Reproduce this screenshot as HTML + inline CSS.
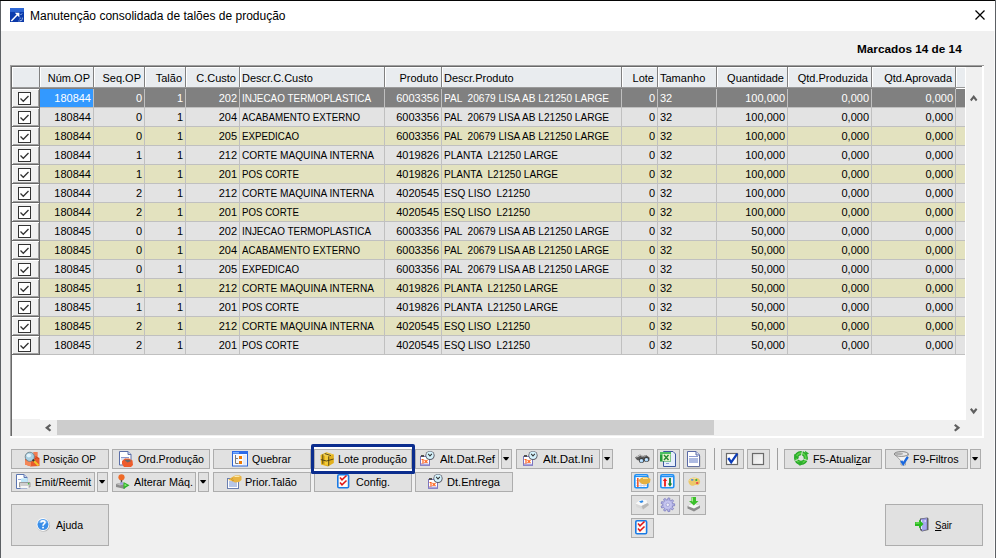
<!DOCTYPE html><html><head><meta charset="utf-8"><style>
*{margin:0;padding:0;box-sizing:border-box}
html,body{width:996px;height:558px;overflow:hidden;background:#f0f0f0;font-family:"Liberation Sans", sans-serif;font-size:11px;color:#000}
.a{position:absolute}
.t{position:absolute;white-space:pre;line-height:13px}
.btn{position:absolute;background:#e1e1e1;border:1px solid #adadad}
.sx{display:inline-block;transform-origin:0 0}
u{text-decoration-skip-ink:none}
</style></head><body>

<div class="a" style="left:0;top:0;width:996px;height:31px;background:#fff"></div>
<div class="a" style="left:0;top:0;width:996px;height:1px;background:#050505"></div>
<div class="a" style="left:60px;top:0;width:20px;height:1px;background:#5c6064"></div>
<div class="a" style="left:0;top:1px;width:1px;height:557px;background:#5c6064"></div>
<div class="a" style="left:995px;top:0;width:1px;height:558px;background:#5c6064"></div>
<div class="a" style="left:994px;top:31px;width:1px;height:527px;background:#fafafa"></div>
<svg class="a" style="left:0;top:0" width="30" height="30" viewBox="0 0 30 30">
<defs><linearGradient id="tg" x1="0" y1="0" x2="0" y2="1"><stop offset="0" stop-color="#2f6ad8"/><stop offset="0.25" stop-color="#2a62d0"/><stop offset="0.32" stop-color="#0b3cae"/><stop offset="1" stop-color="#0a38a8"/></linearGradient></defs>
<rect x="10" y="8" width="14" height="14" fill="url(#tg)"/>
<path d="M11.3 21 L17.8 14.3" stroke="#fff" stroke-width="1.5"/>
<polygon points="14.8,12.8 19.4,12.8 19.4,17.4" fill="#fff"/>
<path d="M20.5 15 l1.5 -1.5 M19.5 19 l1.2 -1 M21.8 18.2 h1.2 M20 21 l2.5 -1.3 M18.5 21 h1" stroke="#b8ccf0" stroke-width="1"/>
</svg>
<div class="t" style="left:30px;top:9px;font-size:12px;line-height:15px;color:#000">Manutenção consolidada de talões de produção</div>
<svg class="a" style="left:974px;top:9px" width="13" height="13" viewBox="0 0 13 13"><path d="M1.5 1.5 L10.5 10.5 M10.5 1.5 L1.5 10.5" stroke="#000" stroke-width="1.25"/></svg>
<div class="t" style="left:857px;top:43px;font-weight:bold;font-size:11px;"><span class="sx" style="transform:scaleX(1.07)">Marcados 14 de 14</span></div>
<div class="a" style="left:10px;top:65px;width:974px;height:373px;background:#fff"></div>
<div class="a" style="left:10px;top:65px;width:972px;height:371px;background:#a0a0a0"></div>
<div class="a" style="left:11px;top:66px;width:971px;height:370px;background:#696969"></div>
<div class="a" style="left:10px;top:65px;width:974px;height:1px;background:#a0a0a0"></div>
<div class="a" style="left:12px;top:67px;width:970px;height:369px;background:#fff"></div>
<div class="a" style="left:12px;top:67px;width:28px;height:22px;background:#808080"></div><div class="a" style="left:12px;top:67px;width:27px;height:21px;background:#fff"></div><div class="a" style="left:13px;top:68px;width:26px;height:20px;background:#e9ecef"></div>
<div class="a" style="left:40px;top:67px;width:54px;height:22px;background:#808080"></div><div class="a" style="left:40px;top:67px;width:53px;height:21px;background:#fff"></div><div class="a" style="left:41px;top:68px;width:52px;height:20px;background:#e9ecef"></div>
<div class="t" style="left:40px;width:50px;text-align:right;top:72px">Núm.OP</div>
<div class="a" style="left:94px;top:67px;width:51px;height:22px;background:#808080"></div><div class="a" style="left:94px;top:67px;width:50px;height:21px;background:#fff"></div><div class="a" style="left:95px;top:68px;width:49px;height:20px;background:#e9ecef"></div>
<div class="t" style="left:94px;width:47px;text-align:right;top:72px">Seq.OP</div>
<div class="a" style="left:145px;top:67px;width:41px;height:22px;background:#808080"></div><div class="a" style="left:145px;top:67px;width:40px;height:21px;background:#fff"></div><div class="a" style="left:146px;top:68px;width:39px;height:20px;background:#e9ecef"></div>
<div class="t" style="left:145px;width:37px;text-align:right;top:72px">Talão</div>
<div class="a" style="left:186px;top:67px;width:54px;height:22px;background:#808080"></div><div class="a" style="left:186px;top:67px;width:53px;height:21px;background:#fff"></div><div class="a" style="left:187px;top:68px;width:52px;height:20px;background:#e9ecef"></div>
<div class="t" style="left:186px;width:50px;text-align:right;top:72px">C.Custo</div>
<div class="a" style="left:240px;top:67px;width:145px;height:22px;background:#808080"></div><div class="a" style="left:240px;top:67px;width:144px;height:21px;background:#fff"></div><div class="a" style="left:241px;top:68px;width:143px;height:20px;background:#e9ecef"></div>
<div class="t" style="left:242px;top:72px">Descr.C.Custo</div>
<div class="a" style="left:385px;top:67px;width:57px;height:22px;background:#808080"></div><div class="a" style="left:385px;top:67px;width:56px;height:21px;background:#fff"></div><div class="a" style="left:386px;top:68px;width:55px;height:20px;background:#e9ecef"></div>
<div class="t" style="left:385px;width:53px;text-align:right;top:72px">Produto</div>
<div class="a" style="left:442px;top:67px;width:180px;height:22px;background:#808080"></div><div class="a" style="left:442px;top:67px;width:179px;height:21px;background:#fff"></div><div class="a" style="left:443px;top:68px;width:178px;height:20px;background:#e9ecef"></div>
<div class="t" style="left:444px;top:72px">Descr.Produto</div>
<div class="a" style="left:622px;top:67px;width:36px;height:22px;background:#808080"></div><div class="a" style="left:622px;top:67px;width:35px;height:21px;background:#fff"></div><div class="a" style="left:623px;top:68px;width:34px;height:20px;background:#e9ecef"></div>
<div class="t" style="left:622px;width:32px;text-align:right;top:72px">Lote</div>
<div class="a" style="left:658px;top:67px;width:59px;height:22px;background:#808080"></div><div class="a" style="left:658px;top:67px;width:58px;height:21px;background:#fff"></div><div class="a" style="left:659px;top:68px;width:57px;height:20px;background:#e9ecef"></div>
<div class="t" style="left:660px;top:72px">Tamanho</div>
<div class="a" style="left:717px;top:67px;width:71px;height:22px;background:#808080"></div><div class="a" style="left:717px;top:67px;width:70px;height:21px;background:#fff"></div><div class="a" style="left:718px;top:68px;width:69px;height:20px;background:#e9ecef"></div>
<div class="t" style="left:717px;width:67px;text-align:right;top:72px">Quantidade</div>
<div class="a" style="left:788px;top:67px;width:84px;height:22px;background:#808080"></div><div class="a" style="left:788px;top:67px;width:83px;height:21px;background:#fff"></div><div class="a" style="left:789px;top:68px;width:82px;height:20px;background:#e9ecef"></div>
<div class="t" style="left:788px;width:80px;text-align:right;top:72px">Qtd.Produzida</div>
<div class="a" style="left:872px;top:67px;width:84px;height:22px;background:#808080"></div><div class="a" style="left:872px;top:67px;width:83px;height:21px;background:#fff"></div><div class="a" style="left:873px;top:68px;width:82px;height:20px;background:#e9ecef"></div>
<div class="t" style="left:872px;width:80px;text-align:right;top:72px">Qtd.Aprovada</div>
<div class="a" style="left:956px;top:67px;width:9px;height:21px;background:#fff"></div><div class="a" style="left:957px;top:68px;width:8px;height:20px;background:#e9ecef"></div>
<div class="a" style="left:12px;top:87px;width:953px;height:1px;background:#9a9a9a"></div>
<div class="a" style="left:12px;top:89px;width:28px;height:19px;background:#696969"></div><div class="a" style="left:12px;top:89px;width:27px;height:18px;background:#fff"></div><div class="a" style="left:13px;top:90px;width:26px;height:17px;background:#a0a0a0"></div>
<div class="a" style="left:13px;top:90px;width:25px;height:16px;background:#f0f0f0"></div>
<div class="a" style="left:18px;top:92px;width:13px;height:13px;border:1px solid #333;background:#fff"></div>
<svg class="a" style="left:19px;top:93px" width="11" height="11" viewBox="0 0 11 11"><path d="M1.5 5.5 L4.3 8.3 L9.5 3" stroke="#333" stroke-width="1.3" fill="none"/></svg>
<div class="a" style="left:40px;top:89px;width:925px;height:19px;background:#c0c0c0"></div>
<div class="a" style="left:40px;top:89px;width:53px;height:18px;background:#3399ff"></div>
<div class="t" style="left:40px;width:51px;text-align:right;top:92px;color:#fff">180844</div>
<div class="a" style="left:94px;top:89px;width:50px;height:18px;background:#808080"></div>
<div class="t" style="left:94px;width:48px;text-align:right;top:92px;color:#fff">0</div>
<div class="a" style="left:145px;top:89px;width:40px;height:18px;background:#808080"></div>
<div class="t" style="left:145px;width:38px;text-align:right;top:92px;color:#fff">1</div>
<div class="a" style="left:186px;top:89px;width:53px;height:18px;background:#808080"></div>
<div class="t" style="left:186px;width:51px;text-align:right;top:92px;color:#fff">202</div>
<div class="a" style="left:240px;top:89px;width:144px;height:18px;background:#808080"></div>
<div class="t" style="left:242px;top:92px;color:#fff"><span class="sx" style="transform:scaleX(0.9)">INJECAO TERMOPLASTICA</span></div>
<div class="a" style="left:385px;top:89px;width:56px;height:18px;background:#808080"></div>
<div class="t" style="left:385px;width:54px;text-align:right;top:92px;color:#fff">6003356</div>
<div class="a" style="left:442px;top:89px;width:179px;height:18px;background:#808080"></div>
<div class="t" style="left:444px;top:92px;color:#fff"><span class="sx" style="transform:scaleX(0.918)">PAL  20679 LISA AB L21250 LARGE</span></div>
<div class="a" style="left:622px;top:89px;width:35px;height:18px;background:#808080"></div>
<div class="t" style="left:622px;width:33px;text-align:right;top:92px;color:#fff">0</div>
<div class="a" style="left:658px;top:89px;width:58px;height:18px;background:#808080"></div>
<div class="t" style="left:660px;top:92px;color:#fff">32</div>
<div class="a" style="left:717px;top:89px;width:70px;height:18px;background:#808080"></div>
<div class="t" style="left:717px;width:68px;text-align:right;top:92px;color:#fff">100,000</div>
<div class="a" style="left:788px;top:89px;width:83px;height:18px;background:#808080"></div>
<div class="t" style="left:788px;width:81px;text-align:right;top:92px;color:#fff">0,000</div>
<div class="a" style="left:872px;top:89px;width:83px;height:18px;background:#808080"></div>
<div class="t" style="left:872px;width:81px;text-align:right;top:92px;color:#fff">0,000</div>
<div class="a" style="left:956px;top:89px;width:9px;height:18px;background:#808080"></div>
<div class="a" style="left:12px;top:108px;width:28px;height:19px;background:#696969"></div><div class="a" style="left:12px;top:108px;width:27px;height:18px;background:#fff"></div><div class="a" style="left:13px;top:109px;width:26px;height:17px;background:#a0a0a0"></div>
<div class="a" style="left:13px;top:109px;width:25px;height:16px;background:#f0f0f0"></div>
<div class="a" style="left:18px;top:111px;width:13px;height:13px;border:1px solid #333;background:#fff"></div>
<svg class="a" style="left:19px;top:112px" width="11" height="11" viewBox="0 0 11 11"><path d="M1.5 5.5 L4.3 8.3 L9.5 3" stroke="#333" stroke-width="1.3" fill="none"/></svg>
<div class="a" style="left:40px;top:108px;width:925px;height:19px;background:#c0c0c0"></div>
<div class="a" style="left:40px;top:108px;width:53px;height:18px;background:#e3e3e3"></div>
<div class="t" style="left:40px;width:51px;text-align:right;top:111px;color:#000">180844</div>
<div class="a" style="left:94px;top:108px;width:50px;height:18px;background:#e3e3e3"></div>
<div class="t" style="left:94px;width:48px;text-align:right;top:111px;color:#000">0</div>
<div class="a" style="left:145px;top:108px;width:40px;height:18px;background:#e3e3e3"></div>
<div class="t" style="left:145px;width:38px;text-align:right;top:111px;color:#000">1</div>
<div class="a" style="left:186px;top:108px;width:53px;height:18px;background:#e3e3e3"></div>
<div class="t" style="left:186px;width:51px;text-align:right;top:111px;color:#000">204</div>
<div class="a" style="left:240px;top:108px;width:144px;height:18px;background:#e3e3e3"></div>
<div class="t" style="left:242px;top:111px;color:#000"><span class="sx" style="transform:scaleX(0.887)">ACABAMENTO EXTERNO</span></div>
<div class="a" style="left:385px;top:108px;width:56px;height:18px;background:#e3e3e3"></div>
<div class="t" style="left:385px;width:54px;text-align:right;top:111px;color:#000">6003356</div>
<div class="a" style="left:442px;top:108px;width:179px;height:18px;background:#e3e3e3"></div>
<div class="t" style="left:444px;top:111px;color:#000"><span class="sx" style="transform:scaleX(0.918)">PAL  20679 LISA AB L21250 LARGE</span></div>
<div class="a" style="left:622px;top:108px;width:35px;height:18px;background:#e3e3e3"></div>
<div class="t" style="left:622px;width:33px;text-align:right;top:111px;color:#000">0</div>
<div class="a" style="left:658px;top:108px;width:58px;height:18px;background:#e3e3e3"></div>
<div class="t" style="left:660px;top:111px;color:#000">32</div>
<div class="a" style="left:717px;top:108px;width:70px;height:18px;background:#e3e3e3"></div>
<div class="t" style="left:717px;width:68px;text-align:right;top:111px;color:#000">100,000</div>
<div class="a" style="left:788px;top:108px;width:83px;height:18px;background:#e3e3e3"></div>
<div class="t" style="left:788px;width:81px;text-align:right;top:111px;color:#000">0,000</div>
<div class="a" style="left:872px;top:108px;width:83px;height:18px;background:#e3e3e3"></div>
<div class="t" style="left:872px;width:81px;text-align:right;top:111px;color:#000">0,000</div>
<div class="a" style="left:956px;top:108px;width:9px;height:18px;background:#e3e3e3"></div>
<div class="a" style="left:12px;top:127px;width:28px;height:19px;background:#696969"></div><div class="a" style="left:12px;top:127px;width:27px;height:18px;background:#fff"></div><div class="a" style="left:13px;top:128px;width:26px;height:17px;background:#a0a0a0"></div>
<div class="a" style="left:13px;top:128px;width:25px;height:16px;background:#f0f0f0"></div>
<div class="a" style="left:18px;top:130px;width:13px;height:13px;border:1px solid #333;background:#fff"></div>
<svg class="a" style="left:19px;top:131px" width="11" height="11" viewBox="0 0 11 11"><path d="M1.5 5.5 L4.3 8.3 L9.5 3" stroke="#333" stroke-width="1.3" fill="none"/></svg>
<div class="a" style="left:40px;top:127px;width:925px;height:19px;background:#c0c0c0"></div>
<div class="a" style="left:40px;top:127px;width:53px;height:18px;background:#e3e2bf"></div>
<div class="t" style="left:40px;width:51px;text-align:right;top:130px;color:#000">180844</div>
<div class="a" style="left:94px;top:127px;width:50px;height:18px;background:#e3e2bf"></div>
<div class="t" style="left:94px;width:48px;text-align:right;top:130px;color:#000">0</div>
<div class="a" style="left:145px;top:127px;width:40px;height:18px;background:#e3e2bf"></div>
<div class="t" style="left:145px;width:38px;text-align:right;top:130px;color:#000">1</div>
<div class="a" style="left:186px;top:127px;width:53px;height:18px;background:#e3e2bf"></div>
<div class="t" style="left:186px;width:51px;text-align:right;top:130px;color:#000">205</div>
<div class="a" style="left:240px;top:127px;width:144px;height:18px;background:#e3e2bf"></div>
<div class="t" style="left:242px;top:130px;color:#000"><span class="sx" style="transform:scaleX(0.888)">EXPEDICAO</span></div>
<div class="a" style="left:385px;top:127px;width:56px;height:18px;background:#e3e2bf"></div>
<div class="t" style="left:385px;width:54px;text-align:right;top:130px;color:#000">6003356</div>
<div class="a" style="left:442px;top:127px;width:179px;height:18px;background:#e3e2bf"></div>
<div class="t" style="left:444px;top:130px;color:#000"><span class="sx" style="transform:scaleX(0.918)">PAL  20679 LISA AB L21250 LARGE</span></div>
<div class="a" style="left:622px;top:127px;width:35px;height:18px;background:#e3e2bf"></div>
<div class="t" style="left:622px;width:33px;text-align:right;top:130px;color:#000">0</div>
<div class="a" style="left:658px;top:127px;width:58px;height:18px;background:#e3e2bf"></div>
<div class="t" style="left:660px;top:130px;color:#000">32</div>
<div class="a" style="left:717px;top:127px;width:70px;height:18px;background:#e3e2bf"></div>
<div class="t" style="left:717px;width:68px;text-align:right;top:130px;color:#000">100,000</div>
<div class="a" style="left:788px;top:127px;width:83px;height:18px;background:#e3e2bf"></div>
<div class="t" style="left:788px;width:81px;text-align:right;top:130px;color:#000">0,000</div>
<div class="a" style="left:872px;top:127px;width:83px;height:18px;background:#e3e2bf"></div>
<div class="t" style="left:872px;width:81px;text-align:right;top:130px;color:#000">0,000</div>
<div class="a" style="left:956px;top:127px;width:9px;height:18px;background:#e3e2bf"></div>
<div class="a" style="left:12px;top:146px;width:28px;height:19px;background:#696969"></div><div class="a" style="left:12px;top:146px;width:27px;height:18px;background:#fff"></div><div class="a" style="left:13px;top:147px;width:26px;height:17px;background:#a0a0a0"></div>
<div class="a" style="left:13px;top:147px;width:25px;height:16px;background:#f0f0f0"></div>
<div class="a" style="left:18px;top:149px;width:13px;height:13px;border:1px solid #333;background:#fff"></div>
<svg class="a" style="left:19px;top:150px" width="11" height="11" viewBox="0 0 11 11"><path d="M1.5 5.5 L4.3 8.3 L9.5 3" stroke="#333" stroke-width="1.3" fill="none"/></svg>
<div class="a" style="left:40px;top:146px;width:925px;height:19px;background:#c0c0c0"></div>
<div class="a" style="left:40px;top:146px;width:53px;height:18px;background:#e3e3e3"></div>
<div class="t" style="left:40px;width:51px;text-align:right;top:149px;color:#000">180844</div>
<div class="a" style="left:94px;top:146px;width:50px;height:18px;background:#e3e3e3"></div>
<div class="t" style="left:94px;width:48px;text-align:right;top:149px;color:#000">1</div>
<div class="a" style="left:145px;top:146px;width:40px;height:18px;background:#e3e3e3"></div>
<div class="t" style="left:145px;width:38px;text-align:right;top:149px;color:#000">1</div>
<div class="a" style="left:186px;top:146px;width:53px;height:18px;background:#e3e3e3"></div>
<div class="t" style="left:186px;width:51px;text-align:right;top:149px;color:#000">212</div>
<div class="a" style="left:240px;top:146px;width:144px;height:18px;background:#e3e3e3"></div>
<div class="t" style="left:242px;top:149px;color:#000"><span class="sx" style="transform:scaleX(0.92)">CORTE MAQUINA INTERNA</span></div>
<div class="a" style="left:385px;top:146px;width:56px;height:18px;background:#e3e3e3"></div>
<div class="t" style="left:385px;width:54px;text-align:right;top:149px;color:#000">4019826</div>
<div class="a" style="left:442px;top:146px;width:179px;height:18px;background:#e3e3e3"></div>
<div class="t" style="left:444px;top:149px;color:#000"><span class="sx" style="transform:scaleX(0.915)">PLANTA  L21250 LARGE</span></div>
<div class="a" style="left:622px;top:146px;width:35px;height:18px;background:#e3e3e3"></div>
<div class="t" style="left:622px;width:33px;text-align:right;top:149px;color:#000">0</div>
<div class="a" style="left:658px;top:146px;width:58px;height:18px;background:#e3e3e3"></div>
<div class="t" style="left:660px;top:149px;color:#000">32</div>
<div class="a" style="left:717px;top:146px;width:70px;height:18px;background:#e3e3e3"></div>
<div class="t" style="left:717px;width:68px;text-align:right;top:149px;color:#000">100,000</div>
<div class="a" style="left:788px;top:146px;width:83px;height:18px;background:#e3e3e3"></div>
<div class="t" style="left:788px;width:81px;text-align:right;top:149px;color:#000">0,000</div>
<div class="a" style="left:872px;top:146px;width:83px;height:18px;background:#e3e3e3"></div>
<div class="t" style="left:872px;width:81px;text-align:right;top:149px;color:#000">0,000</div>
<div class="a" style="left:956px;top:146px;width:9px;height:18px;background:#e3e3e3"></div>
<div class="a" style="left:12px;top:165px;width:28px;height:19px;background:#696969"></div><div class="a" style="left:12px;top:165px;width:27px;height:18px;background:#fff"></div><div class="a" style="left:13px;top:166px;width:26px;height:17px;background:#a0a0a0"></div>
<div class="a" style="left:13px;top:166px;width:25px;height:16px;background:#f0f0f0"></div>
<div class="a" style="left:18px;top:168px;width:13px;height:13px;border:1px solid #333;background:#fff"></div>
<svg class="a" style="left:19px;top:169px" width="11" height="11" viewBox="0 0 11 11"><path d="M1.5 5.5 L4.3 8.3 L9.5 3" stroke="#333" stroke-width="1.3" fill="none"/></svg>
<div class="a" style="left:40px;top:165px;width:925px;height:19px;background:#c0c0c0"></div>
<div class="a" style="left:40px;top:165px;width:53px;height:18px;background:#e3e2bf"></div>
<div class="t" style="left:40px;width:51px;text-align:right;top:168px;color:#000">180844</div>
<div class="a" style="left:94px;top:165px;width:50px;height:18px;background:#e3e2bf"></div>
<div class="t" style="left:94px;width:48px;text-align:right;top:168px;color:#000">1</div>
<div class="a" style="left:145px;top:165px;width:40px;height:18px;background:#e3e2bf"></div>
<div class="t" style="left:145px;width:38px;text-align:right;top:168px;color:#000">1</div>
<div class="a" style="left:186px;top:165px;width:53px;height:18px;background:#e3e2bf"></div>
<div class="t" style="left:186px;width:51px;text-align:right;top:168px;color:#000">201</div>
<div class="a" style="left:240px;top:165px;width:144px;height:18px;background:#e3e2bf"></div>
<div class="t" style="left:242px;top:168px;color:#000"><span class="sx" style="transform:scaleX(0.88)">POS CORTE</span></div>
<div class="a" style="left:385px;top:165px;width:56px;height:18px;background:#e3e2bf"></div>
<div class="t" style="left:385px;width:54px;text-align:right;top:168px;color:#000">4019826</div>
<div class="a" style="left:442px;top:165px;width:179px;height:18px;background:#e3e2bf"></div>
<div class="t" style="left:444px;top:168px;color:#000"><span class="sx" style="transform:scaleX(0.915)">PLANTA  L21250 LARGE</span></div>
<div class="a" style="left:622px;top:165px;width:35px;height:18px;background:#e3e2bf"></div>
<div class="t" style="left:622px;width:33px;text-align:right;top:168px;color:#000">0</div>
<div class="a" style="left:658px;top:165px;width:58px;height:18px;background:#e3e2bf"></div>
<div class="t" style="left:660px;top:168px;color:#000">32</div>
<div class="a" style="left:717px;top:165px;width:70px;height:18px;background:#e3e2bf"></div>
<div class="t" style="left:717px;width:68px;text-align:right;top:168px;color:#000">100,000</div>
<div class="a" style="left:788px;top:165px;width:83px;height:18px;background:#e3e2bf"></div>
<div class="t" style="left:788px;width:81px;text-align:right;top:168px;color:#000">0,000</div>
<div class="a" style="left:872px;top:165px;width:83px;height:18px;background:#e3e2bf"></div>
<div class="t" style="left:872px;width:81px;text-align:right;top:168px;color:#000">0,000</div>
<div class="a" style="left:956px;top:165px;width:9px;height:18px;background:#e3e2bf"></div>
<div class="a" style="left:12px;top:184px;width:28px;height:19px;background:#696969"></div><div class="a" style="left:12px;top:184px;width:27px;height:18px;background:#fff"></div><div class="a" style="left:13px;top:185px;width:26px;height:17px;background:#a0a0a0"></div>
<div class="a" style="left:13px;top:185px;width:25px;height:16px;background:#f0f0f0"></div>
<div class="a" style="left:18px;top:187px;width:13px;height:13px;border:1px solid #333;background:#fff"></div>
<svg class="a" style="left:19px;top:188px" width="11" height="11" viewBox="0 0 11 11"><path d="M1.5 5.5 L4.3 8.3 L9.5 3" stroke="#333" stroke-width="1.3" fill="none"/></svg>
<div class="a" style="left:40px;top:184px;width:925px;height:19px;background:#c0c0c0"></div>
<div class="a" style="left:40px;top:184px;width:53px;height:18px;background:#e3e3e3"></div>
<div class="t" style="left:40px;width:51px;text-align:right;top:187px;color:#000">180844</div>
<div class="a" style="left:94px;top:184px;width:50px;height:18px;background:#e3e3e3"></div>
<div class="t" style="left:94px;width:48px;text-align:right;top:187px;color:#000">2</div>
<div class="a" style="left:145px;top:184px;width:40px;height:18px;background:#e3e3e3"></div>
<div class="t" style="left:145px;width:38px;text-align:right;top:187px;color:#000">1</div>
<div class="a" style="left:186px;top:184px;width:53px;height:18px;background:#e3e3e3"></div>
<div class="t" style="left:186px;width:51px;text-align:right;top:187px;color:#000">212</div>
<div class="a" style="left:240px;top:184px;width:144px;height:18px;background:#e3e3e3"></div>
<div class="t" style="left:242px;top:187px;color:#000"><span class="sx" style="transform:scaleX(0.92)">CORTE MAQUINA INTERNA</span></div>
<div class="a" style="left:385px;top:184px;width:56px;height:18px;background:#e3e3e3"></div>
<div class="t" style="left:385px;width:54px;text-align:right;top:187px;color:#000">4020545</div>
<div class="a" style="left:442px;top:184px;width:179px;height:18px;background:#e3e3e3"></div>
<div class="t" style="left:444px;top:187px;color:#000"><span class="sx" style="transform:scaleX(0.915)">ESQ LISO  L21250</span></div>
<div class="a" style="left:622px;top:184px;width:35px;height:18px;background:#e3e3e3"></div>
<div class="t" style="left:622px;width:33px;text-align:right;top:187px;color:#000">0</div>
<div class="a" style="left:658px;top:184px;width:58px;height:18px;background:#e3e3e3"></div>
<div class="t" style="left:660px;top:187px;color:#000">32</div>
<div class="a" style="left:717px;top:184px;width:70px;height:18px;background:#e3e3e3"></div>
<div class="t" style="left:717px;width:68px;text-align:right;top:187px;color:#000">100,000</div>
<div class="a" style="left:788px;top:184px;width:83px;height:18px;background:#e3e3e3"></div>
<div class="t" style="left:788px;width:81px;text-align:right;top:187px;color:#000">0,000</div>
<div class="a" style="left:872px;top:184px;width:83px;height:18px;background:#e3e3e3"></div>
<div class="t" style="left:872px;width:81px;text-align:right;top:187px;color:#000">0,000</div>
<div class="a" style="left:956px;top:184px;width:9px;height:18px;background:#e3e3e3"></div>
<div class="a" style="left:12px;top:203px;width:28px;height:19px;background:#696969"></div><div class="a" style="left:12px;top:203px;width:27px;height:18px;background:#fff"></div><div class="a" style="left:13px;top:204px;width:26px;height:17px;background:#a0a0a0"></div>
<div class="a" style="left:13px;top:204px;width:25px;height:16px;background:#f0f0f0"></div>
<div class="a" style="left:18px;top:206px;width:13px;height:13px;border:1px solid #333;background:#fff"></div>
<svg class="a" style="left:19px;top:207px" width="11" height="11" viewBox="0 0 11 11"><path d="M1.5 5.5 L4.3 8.3 L9.5 3" stroke="#333" stroke-width="1.3" fill="none"/></svg>
<div class="a" style="left:40px;top:203px;width:925px;height:19px;background:#c0c0c0"></div>
<div class="a" style="left:40px;top:203px;width:53px;height:18px;background:#e3e2bf"></div>
<div class="t" style="left:40px;width:51px;text-align:right;top:206px;color:#000">180844</div>
<div class="a" style="left:94px;top:203px;width:50px;height:18px;background:#e3e2bf"></div>
<div class="t" style="left:94px;width:48px;text-align:right;top:206px;color:#000">2</div>
<div class="a" style="left:145px;top:203px;width:40px;height:18px;background:#e3e2bf"></div>
<div class="t" style="left:145px;width:38px;text-align:right;top:206px;color:#000">1</div>
<div class="a" style="left:186px;top:203px;width:53px;height:18px;background:#e3e2bf"></div>
<div class="t" style="left:186px;width:51px;text-align:right;top:206px;color:#000">201</div>
<div class="a" style="left:240px;top:203px;width:144px;height:18px;background:#e3e2bf"></div>
<div class="t" style="left:242px;top:206px;color:#000"><span class="sx" style="transform:scaleX(0.88)">POS CORTE</span></div>
<div class="a" style="left:385px;top:203px;width:56px;height:18px;background:#e3e2bf"></div>
<div class="t" style="left:385px;width:54px;text-align:right;top:206px;color:#000">4020545</div>
<div class="a" style="left:442px;top:203px;width:179px;height:18px;background:#e3e2bf"></div>
<div class="t" style="left:444px;top:206px;color:#000"><span class="sx" style="transform:scaleX(0.915)">ESQ LISO  L21250</span></div>
<div class="a" style="left:622px;top:203px;width:35px;height:18px;background:#e3e2bf"></div>
<div class="t" style="left:622px;width:33px;text-align:right;top:206px;color:#000">0</div>
<div class="a" style="left:658px;top:203px;width:58px;height:18px;background:#e3e2bf"></div>
<div class="t" style="left:660px;top:206px;color:#000">32</div>
<div class="a" style="left:717px;top:203px;width:70px;height:18px;background:#e3e2bf"></div>
<div class="t" style="left:717px;width:68px;text-align:right;top:206px;color:#000">100,000</div>
<div class="a" style="left:788px;top:203px;width:83px;height:18px;background:#e3e2bf"></div>
<div class="t" style="left:788px;width:81px;text-align:right;top:206px;color:#000">0,000</div>
<div class="a" style="left:872px;top:203px;width:83px;height:18px;background:#e3e2bf"></div>
<div class="t" style="left:872px;width:81px;text-align:right;top:206px;color:#000">0,000</div>
<div class="a" style="left:956px;top:203px;width:9px;height:18px;background:#e3e2bf"></div>
<div class="a" style="left:12px;top:222px;width:28px;height:19px;background:#696969"></div><div class="a" style="left:12px;top:222px;width:27px;height:18px;background:#fff"></div><div class="a" style="left:13px;top:223px;width:26px;height:17px;background:#a0a0a0"></div>
<div class="a" style="left:13px;top:223px;width:25px;height:16px;background:#f0f0f0"></div>
<div class="a" style="left:18px;top:225px;width:13px;height:13px;border:1px solid #333;background:#fff"></div>
<svg class="a" style="left:19px;top:226px" width="11" height="11" viewBox="0 0 11 11"><path d="M1.5 5.5 L4.3 8.3 L9.5 3" stroke="#333" stroke-width="1.3" fill="none"/></svg>
<div class="a" style="left:40px;top:222px;width:925px;height:19px;background:#c0c0c0"></div>
<div class="a" style="left:40px;top:222px;width:53px;height:18px;background:#e3e3e3"></div>
<div class="t" style="left:40px;width:51px;text-align:right;top:225px;color:#000">180845</div>
<div class="a" style="left:94px;top:222px;width:50px;height:18px;background:#e3e3e3"></div>
<div class="t" style="left:94px;width:48px;text-align:right;top:225px;color:#000">0</div>
<div class="a" style="left:145px;top:222px;width:40px;height:18px;background:#e3e3e3"></div>
<div class="t" style="left:145px;width:38px;text-align:right;top:225px;color:#000">1</div>
<div class="a" style="left:186px;top:222px;width:53px;height:18px;background:#e3e3e3"></div>
<div class="t" style="left:186px;width:51px;text-align:right;top:225px;color:#000">202</div>
<div class="a" style="left:240px;top:222px;width:144px;height:18px;background:#e3e3e3"></div>
<div class="t" style="left:242px;top:225px;color:#000"><span class="sx" style="transform:scaleX(0.9)">INJECAO TERMOPLASTICA</span></div>
<div class="a" style="left:385px;top:222px;width:56px;height:18px;background:#e3e3e3"></div>
<div class="t" style="left:385px;width:54px;text-align:right;top:225px;color:#000">6003356</div>
<div class="a" style="left:442px;top:222px;width:179px;height:18px;background:#e3e3e3"></div>
<div class="t" style="left:444px;top:225px;color:#000"><span class="sx" style="transform:scaleX(0.918)">PAL  20679 LISA AB L21250 LARGE</span></div>
<div class="a" style="left:622px;top:222px;width:35px;height:18px;background:#e3e3e3"></div>
<div class="t" style="left:622px;width:33px;text-align:right;top:225px;color:#000">0</div>
<div class="a" style="left:658px;top:222px;width:58px;height:18px;background:#e3e3e3"></div>
<div class="t" style="left:660px;top:225px;color:#000">32</div>
<div class="a" style="left:717px;top:222px;width:70px;height:18px;background:#e3e3e3"></div>
<div class="t" style="left:717px;width:68px;text-align:right;top:225px;color:#000">50,000</div>
<div class="a" style="left:788px;top:222px;width:83px;height:18px;background:#e3e3e3"></div>
<div class="t" style="left:788px;width:81px;text-align:right;top:225px;color:#000">0,000</div>
<div class="a" style="left:872px;top:222px;width:83px;height:18px;background:#e3e3e3"></div>
<div class="t" style="left:872px;width:81px;text-align:right;top:225px;color:#000">0,000</div>
<div class="a" style="left:956px;top:222px;width:9px;height:18px;background:#e3e3e3"></div>
<div class="a" style="left:12px;top:241px;width:28px;height:19px;background:#696969"></div><div class="a" style="left:12px;top:241px;width:27px;height:18px;background:#fff"></div><div class="a" style="left:13px;top:242px;width:26px;height:17px;background:#a0a0a0"></div>
<div class="a" style="left:13px;top:242px;width:25px;height:16px;background:#f0f0f0"></div>
<div class="a" style="left:18px;top:244px;width:13px;height:13px;border:1px solid #333;background:#fff"></div>
<svg class="a" style="left:19px;top:245px" width="11" height="11" viewBox="0 0 11 11"><path d="M1.5 5.5 L4.3 8.3 L9.5 3" stroke="#333" stroke-width="1.3" fill="none"/></svg>
<div class="a" style="left:40px;top:241px;width:925px;height:19px;background:#c0c0c0"></div>
<div class="a" style="left:40px;top:241px;width:53px;height:18px;background:#e3e2bf"></div>
<div class="t" style="left:40px;width:51px;text-align:right;top:244px;color:#000">180845</div>
<div class="a" style="left:94px;top:241px;width:50px;height:18px;background:#e3e2bf"></div>
<div class="t" style="left:94px;width:48px;text-align:right;top:244px;color:#000">0</div>
<div class="a" style="left:145px;top:241px;width:40px;height:18px;background:#e3e2bf"></div>
<div class="t" style="left:145px;width:38px;text-align:right;top:244px;color:#000">1</div>
<div class="a" style="left:186px;top:241px;width:53px;height:18px;background:#e3e2bf"></div>
<div class="t" style="left:186px;width:51px;text-align:right;top:244px;color:#000">204</div>
<div class="a" style="left:240px;top:241px;width:144px;height:18px;background:#e3e2bf"></div>
<div class="t" style="left:242px;top:244px;color:#000"><span class="sx" style="transform:scaleX(0.887)">ACABAMENTO EXTERNO</span></div>
<div class="a" style="left:385px;top:241px;width:56px;height:18px;background:#e3e2bf"></div>
<div class="t" style="left:385px;width:54px;text-align:right;top:244px;color:#000">6003356</div>
<div class="a" style="left:442px;top:241px;width:179px;height:18px;background:#e3e2bf"></div>
<div class="t" style="left:444px;top:244px;color:#000"><span class="sx" style="transform:scaleX(0.918)">PAL  20679 LISA AB L21250 LARGE</span></div>
<div class="a" style="left:622px;top:241px;width:35px;height:18px;background:#e3e2bf"></div>
<div class="t" style="left:622px;width:33px;text-align:right;top:244px;color:#000">0</div>
<div class="a" style="left:658px;top:241px;width:58px;height:18px;background:#e3e2bf"></div>
<div class="t" style="left:660px;top:244px;color:#000">32</div>
<div class="a" style="left:717px;top:241px;width:70px;height:18px;background:#e3e2bf"></div>
<div class="t" style="left:717px;width:68px;text-align:right;top:244px;color:#000">50,000</div>
<div class="a" style="left:788px;top:241px;width:83px;height:18px;background:#e3e2bf"></div>
<div class="t" style="left:788px;width:81px;text-align:right;top:244px;color:#000">0,000</div>
<div class="a" style="left:872px;top:241px;width:83px;height:18px;background:#e3e2bf"></div>
<div class="t" style="left:872px;width:81px;text-align:right;top:244px;color:#000">0,000</div>
<div class="a" style="left:956px;top:241px;width:9px;height:18px;background:#e3e2bf"></div>
<div class="a" style="left:12px;top:260px;width:28px;height:19px;background:#696969"></div><div class="a" style="left:12px;top:260px;width:27px;height:18px;background:#fff"></div><div class="a" style="left:13px;top:261px;width:26px;height:17px;background:#a0a0a0"></div>
<div class="a" style="left:13px;top:261px;width:25px;height:16px;background:#f0f0f0"></div>
<div class="a" style="left:18px;top:263px;width:13px;height:13px;border:1px solid #333;background:#fff"></div>
<svg class="a" style="left:19px;top:264px" width="11" height="11" viewBox="0 0 11 11"><path d="M1.5 5.5 L4.3 8.3 L9.5 3" stroke="#333" stroke-width="1.3" fill="none"/></svg>
<div class="a" style="left:40px;top:260px;width:925px;height:19px;background:#c0c0c0"></div>
<div class="a" style="left:40px;top:260px;width:53px;height:18px;background:#e3e3e3"></div>
<div class="t" style="left:40px;width:51px;text-align:right;top:263px;color:#000">180845</div>
<div class="a" style="left:94px;top:260px;width:50px;height:18px;background:#e3e3e3"></div>
<div class="t" style="left:94px;width:48px;text-align:right;top:263px;color:#000">0</div>
<div class="a" style="left:145px;top:260px;width:40px;height:18px;background:#e3e3e3"></div>
<div class="t" style="left:145px;width:38px;text-align:right;top:263px;color:#000">1</div>
<div class="a" style="left:186px;top:260px;width:53px;height:18px;background:#e3e3e3"></div>
<div class="t" style="left:186px;width:51px;text-align:right;top:263px;color:#000">205</div>
<div class="a" style="left:240px;top:260px;width:144px;height:18px;background:#e3e3e3"></div>
<div class="t" style="left:242px;top:263px;color:#000"><span class="sx" style="transform:scaleX(0.888)">EXPEDICAO</span></div>
<div class="a" style="left:385px;top:260px;width:56px;height:18px;background:#e3e3e3"></div>
<div class="t" style="left:385px;width:54px;text-align:right;top:263px;color:#000">6003356</div>
<div class="a" style="left:442px;top:260px;width:179px;height:18px;background:#e3e3e3"></div>
<div class="t" style="left:444px;top:263px;color:#000"><span class="sx" style="transform:scaleX(0.918)">PAL  20679 LISA AB L21250 LARGE</span></div>
<div class="a" style="left:622px;top:260px;width:35px;height:18px;background:#e3e3e3"></div>
<div class="t" style="left:622px;width:33px;text-align:right;top:263px;color:#000">0</div>
<div class="a" style="left:658px;top:260px;width:58px;height:18px;background:#e3e3e3"></div>
<div class="t" style="left:660px;top:263px;color:#000">32</div>
<div class="a" style="left:717px;top:260px;width:70px;height:18px;background:#e3e3e3"></div>
<div class="t" style="left:717px;width:68px;text-align:right;top:263px;color:#000">50,000</div>
<div class="a" style="left:788px;top:260px;width:83px;height:18px;background:#e3e3e3"></div>
<div class="t" style="left:788px;width:81px;text-align:right;top:263px;color:#000">0,000</div>
<div class="a" style="left:872px;top:260px;width:83px;height:18px;background:#e3e3e3"></div>
<div class="t" style="left:872px;width:81px;text-align:right;top:263px;color:#000">0,000</div>
<div class="a" style="left:956px;top:260px;width:9px;height:18px;background:#e3e3e3"></div>
<div class="a" style="left:12px;top:279px;width:28px;height:19px;background:#696969"></div><div class="a" style="left:12px;top:279px;width:27px;height:18px;background:#fff"></div><div class="a" style="left:13px;top:280px;width:26px;height:17px;background:#a0a0a0"></div>
<div class="a" style="left:13px;top:280px;width:25px;height:16px;background:#f0f0f0"></div>
<div class="a" style="left:18px;top:282px;width:13px;height:13px;border:1px solid #333;background:#fff"></div>
<svg class="a" style="left:19px;top:283px" width="11" height="11" viewBox="0 0 11 11"><path d="M1.5 5.5 L4.3 8.3 L9.5 3" stroke="#333" stroke-width="1.3" fill="none"/></svg>
<div class="a" style="left:40px;top:279px;width:925px;height:19px;background:#c0c0c0"></div>
<div class="a" style="left:40px;top:279px;width:53px;height:18px;background:#e3e2bf"></div>
<div class="t" style="left:40px;width:51px;text-align:right;top:282px;color:#000">180845</div>
<div class="a" style="left:94px;top:279px;width:50px;height:18px;background:#e3e2bf"></div>
<div class="t" style="left:94px;width:48px;text-align:right;top:282px;color:#000">1</div>
<div class="a" style="left:145px;top:279px;width:40px;height:18px;background:#e3e2bf"></div>
<div class="t" style="left:145px;width:38px;text-align:right;top:282px;color:#000">1</div>
<div class="a" style="left:186px;top:279px;width:53px;height:18px;background:#e3e2bf"></div>
<div class="t" style="left:186px;width:51px;text-align:right;top:282px;color:#000">212</div>
<div class="a" style="left:240px;top:279px;width:144px;height:18px;background:#e3e2bf"></div>
<div class="t" style="left:242px;top:282px;color:#000"><span class="sx" style="transform:scaleX(0.92)">CORTE MAQUINA INTERNA</span></div>
<div class="a" style="left:385px;top:279px;width:56px;height:18px;background:#e3e2bf"></div>
<div class="t" style="left:385px;width:54px;text-align:right;top:282px;color:#000">4019826</div>
<div class="a" style="left:442px;top:279px;width:179px;height:18px;background:#e3e2bf"></div>
<div class="t" style="left:444px;top:282px;color:#000"><span class="sx" style="transform:scaleX(0.915)">PLANTA  L21250 LARGE</span></div>
<div class="a" style="left:622px;top:279px;width:35px;height:18px;background:#e3e2bf"></div>
<div class="t" style="left:622px;width:33px;text-align:right;top:282px;color:#000">0</div>
<div class="a" style="left:658px;top:279px;width:58px;height:18px;background:#e3e2bf"></div>
<div class="t" style="left:660px;top:282px;color:#000">32</div>
<div class="a" style="left:717px;top:279px;width:70px;height:18px;background:#e3e2bf"></div>
<div class="t" style="left:717px;width:68px;text-align:right;top:282px;color:#000">50,000</div>
<div class="a" style="left:788px;top:279px;width:83px;height:18px;background:#e3e2bf"></div>
<div class="t" style="left:788px;width:81px;text-align:right;top:282px;color:#000">0,000</div>
<div class="a" style="left:872px;top:279px;width:83px;height:18px;background:#e3e2bf"></div>
<div class="t" style="left:872px;width:81px;text-align:right;top:282px;color:#000">0,000</div>
<div class="a" style="left:956px;top:279px;width:9px;height:18px;background:#e3e2bf"></div>
<div class="a" style="left:12px;top:298px;width:28px;height:19px;background:#696969"></div><div class="a" style="left:12px;top:298px;width:27px;height:18px;background:#fff"></div><div class="a" style="left:13px;top:299px;width:26px;height:17px;background:#a0a0a0"></div>
<div class="a" style="left:13px;top:299px;width:25px;height:16px;background:#f0f0f0"></div>
<div class="a" style="left:18px;top:301px;width:13px;height:13px;border:1px solid #333;background:#fff"></div>
<svg class="a" style="left:19px;top:302px" width="11" height="11" viewBox="0 0 11 11"><path d="M1.5 5.5 L4.3 8.3 L9.5 3" stroke="#333" stroke-width="1.3" fill="none"/></svg>
<div class="a" style="left:40px;top:298px;width:925px;height:19px;background:#c0c0c0"></div>
<div class="a" style="left:40px;top:298px;width:53px;height:18px;background:#e3e3e3"></div>
<div class="t" style="left:40px;width:51px;text-align:right;top:301px;color:#000">180845</div>
<div class="a" style="left:94px;top:298px;width:50px;height:18px;background:#e3e3e3"></div>
<div class="t" style="left:94px;width:48px;text-align:right;top:301px;color:#000">1</div>
<div class="a" style="left:145px;top:298px;width:40px;height:18px;background:#e3e3e3"></div>
<div class="t" style="left:145px;width:38px;text-align:right;top:301px;color:#000">1</div>
<div class="a" style="left:186px;top:298px;width:53px;height:18px;background:#e3e3e3"></div>
<div class="t" style="left:186px;width:51px;text-align:right;top:301px;color:#000">201</div>
<div class="a" style="left:240px;top:298px;width:144px;height:18px;background:#e3e3e3"></div>
<div class="t" style="left:242px;top:301px;color:#000"><span class="sx" style="transform:scaleX(0.88)">POS CORTE</span></div>
<div class="a" style="left:385px;top:298px;width:56px;height:18px;background:#e3e3e3"></div>
<div class="t" style="left:385px;width:54px;text-align:right;top:301px;color:#000">4019826</div>
<div class="a" style="left:442px;top:298px;width:179px;height:18px;background:#e3e3e3"></div>
<div class="t" style="left:444px;top:301px;color:#000"><span class="sx" style="transform:scaleX(0.915)">PLANTA  L21250 LARGE</span></div>
<div class="a" style="left:622px;top:298px;width:35px;height:18px;background:#e3e3e3"></div>
<div class="t" style="left:622px;width:33px;text-align:right;top:301px;color:#000">0</div>
<div class="a" style="left:658px;top:298px;width:58px;height:18px;background:#e3e3e3"></div>
<div class="t" style="left:660px;top:301px;color:#000">32</div>
<div class="a" style="left:717px;top:298px;width:70px;height:18px;background:#e3e3e3"></div>
<div class="t" style="left:717px;width:68px;text-align:right;top:301px;color:#000">50,000</div>
<div class="a" style="left:788px;top:298px;width:83px;height:18px;background:#e3e3e3"></div>
<div class="t" style="left:788px;width:81px;text-align:right;top:301px;color:#000">0,000</div>
<div class="a" style="left:872px;top:298px;width:83px;height:18px;background:#e3e3e3"></div>
<div class="t" style="left:872px;width:81px;text-align:right;top:301px;color:#000">0,000</div>
<div class="a" style="left:956px;top:298px;width:9px;height:18px;background:#e3e3e3"></div>
<div class="a" style="left:12px;top:317px;width:28px;height:19px;background:#696969"></div><div class="a" style="left:12px;top:317px;width:27px;height:18px;background:#fff"></div><div class="a" style="left:13px;top:318px;width:26px;height:17px;background:#a0a0a0"></div>
<div class="a" style="left:13px;top:318px;width:25px;height:16px;background:#f0f0f0"></div>
<div class="a" style="left:18px;top:320px;width:13px;height:13px;border:1px solid #333;background:#fff"></div>
<svg class="a" style="left:19px;top:321px" width="11" height="11" viewBox="0 0 11 11"><path d="M1.5 5.5 L4.3 8.3 L9.5 3" stroke="#333" stroke-width="1.3" fill="none"/></svg>
<div class="a" style="left:40px;top:317px;width:925px;height:19px;background:#c0c0c0"></div>
<div class="a" style="left:40px;top:317px;width:53px;height:18px;background:#e3e2bf"></div>
<div class="t" style="left:40px;width:51px;text-align:right;top:320px;color:#000">180845</div>
<div class="a" style="left:94px;top:317px;width:50px;height:18px;background:#e3e2bf"></div>
<div class="t" style="left:94px;width:48px;text-align:right;top:320px;color:#000">2</div>
<div class="a" style="left:145px;top:317px;width:40px;height:18px;background:#e3e2bf"></div>
<div class="t" style="left:145px;width:38px;text-align:right;top:320px;color:#000">1</div>
<div class="a" style="left:186px;top:317px;width:53px;height:18px;background:#e3e2bf"></div>
<div class="t" style="left:186px;width:51px;text-align:right;top:320px;color:#000">212</div>
<div class="a" style="left:240px;top:317px;width:144px;height:18px;background:#e3e2bf"></div>
<div class="t" style="left:242px;top:320px;color:#000"><span class="sx" style="transform:scaleX(0.92)">CORTE MAQUINA INTERNA</span></div>
<div class="a" style="left:385px;top:317px;width:56px;height:18px;background:#e3e2bf"></div>
<div class="t" style="left:385px;width:54px;text-align:right;top:320px;color:#000">4020545</div>
<div class="a" style="left:442px;top:317px;width:179px;height:18px;background:#e3e2bf"></div>
<div class="t" style="left:444px;top:320px;color:#000"><span class="sx" style="transform:scaleX(0.915)">ESQ LISO  L21250</span></div>
<div class="a" style="left:622px;top:317px;width:35px;height:18px;background:#e3e2bf"></div>
<div class="t" style="left:622px;width:33px;text-align:right;top:320px;color:#000">0</div>
<div class="a" style="left:658px;top:317px;width:58px;height:18px;background:#e3e2bf"></div>
<div class="t" style="left:660px;top:320px;color:#000">32</div>
<div class="a" style="left:717px;top:317px;width:70px;height:18px;background:#e3e2bf"></div>
<div class="t" style="left:717px;width:68px;text-align:right;top:320px;color:#000">50,000</div>
<div class="a" style="left:788px;top:317px;width:83px;height:18px;background:#e3e2bf"></div>
<div class="t" style="left:788px;width:81px;text-align:right;top:320px;color:#000">0,000</div>
<div class="a" style="left:872px;top:317px;width:83px;height:18px;background:#e3e2bf"></div>
<div class="t" style="left:872px;width:81px;text-align:right;top:320px;color:#000">0,000</div>
<div class="a" style="left:956px;top:317px;width:9px;height:18px;background:#e3e2bf"></div>
<div class="a" style="left:12px;top:336px;width:28px;height:19px;background:#696969"></div><div class="a" style="left:12px;top:336px;width:27px;height:18px;background:#fff"></div><div class="a" style="left:13px;top:337px;width:26px;height:17px;background:#a0a0a0"></div>
<div class="a" style="left:13px;top:337px;width:25px;height:16px;background:#f0f0f0"></div>
<div class="a" style="left:18px;top:339px;width:13px;height:13px;border:1px solid #333;background:#fff"></div>
<svg class="a" style="left:19px;top:340px" width="11" height="11" viewBox="0 0 11 11"><path d="M1.5 5.5 L4.3 8.3 L9.5 3" stroke="#333" stroke-width="1.3" fill="none"/></svg>
<div class="a" style="left:40px;top:336px;width:925px;height:19px;background:#c0c0c0"></div>
<div class="a" style="left:40px;top:336px;width:53px;height:18px;background:#e3e3e3"></div>
<div class="t" style="left:40px;width:51px;text-align:right;top:339px;color:#000">180845</div>
<div class="a" style="left:94px;top:336px;width:50px;height:18px;background:#e3e3e3"></div>
<div class="t" style="left:94px;width:48px;text-align:right;top:339px;color:#000">2</div>
<div class="a" style="left:145px;top:336px;width:40px;height:18px;background:#e3e3e3"></div>
<div class="t" style="left:145px;width:38px;text-align:right;top:339px;color:#000">1</div>
<div class="a" style="left:186px;top:336px;width:53px;height:18px;background:#e3e3e3"></div>
<div class="t" style="left:186px;width:51px;text-align:right;top:339px;color:#000">201</div>
<div class="a" style="left:240px;top:336px;width:144px;height:18px;background:#e3e3e3"></div>
<div class="t" style="left:242px;top:339px;color:#000"><span class="sx" style="transform:scaleX(0.88)">POS CORTE</span></div>
<div class="a" style="left:385px;top:336px;width:56px;height:18px;background:#e3e3e3"></div>
<div class="t" style="left:385px;width:54px;text-align:right;top:339px;color:#000">4020545</div>
<div class="a" style="left:442px;top:336px;width:179px;height:18px;background:#e3e3e3"></div>
<div class="t" style="left:444px;top:339px;color:#000"><span class="sx" style="transform:scaleX(0.915)">ESQ LISO  L21250</span></div>
<div class="a" style="left:622px;top:336px;width:35px;height:18px;background:#e3e3e3"></div>
<div class="t" style="left:622px;width:33px;text-align:right;top:339px;color:#000">0</div>
<div class="a" style="left:658px;top:336px;width:58px;height:18px;background:#e3e3e3"></div>
<div class="t" style="left:660px;top:339px;color:#000">32</div>
<div class="a" style="left:717px;top:336px;width:70px;height:18px;background:#e3e3e3"></div>
<div class="t" style="left:717px;width:68px;text-align:right;top:339px;color:#000">50,000</div>
<div class="a" style="left:788px;top:336px;width:83px;height:18px;background:#e3e3e3"></div>
<div class="t" style="left:788px;width:81px;text-align:right;top:339px;color:#000">0,000</div>
<div class="a" style="left:872px;top:336px;width:83px;height:18px;background:#e3e3e3"></div>
<div class="t" style="left:872px;width:81px;text-align:right;top:339px;color:#000">0,000</div>
<div class="a" style="left:956px;top:336px;width:9px;height:18px;background:#e3e3e3"></div>
<div class="a" style="left:966px;top:67px;width:16px;height:369px;background:#f0f0f0"></div>
<svg class="a" style="left:970px;top:95px" width="8" height="7" viewBox="0 0 8 7"><polygon points="0,4.7 1.5,6.2 3.7,3.6 5.9,6.2 7.4,4.7 3.7,0" fill="#5f5f5f"/></svg>
<svg class="a" style="left:970px;top:408px" width="8" height="7" viewBox="0 0 8 7"><polygon points="0,1.5 1.5,0 3.7,2.6 5.9,0 7.4,1.5 3.7,6.2" fill="#5f5f5f"/></svg>
<div class="a" style="left:12px;top:419px;width:28px;height:17px;background:#f0f0f0"></div>
<div class="a" style="left:40px;top:420px;width:942px;height:16px;background:#f0f0f0"></div>
<div class="a" style="left:57px;top:420px;width:657px;height:15px;background:#cdcdcd"></div>
<svg class="a" style="left:45px;top:424px" width="7" height="8" viewBox="0 0 7 8"><polygon points="4.7,0 6.2,1.5 3.6,3.7 6.2,5.9 4.7,7.4 0,3.7" fill="#5f5f5f"/></svg>
<svg class="a" style="left:954px;top:424px" width="7" height="8" viewBox="0 0 7 8"><polygon points="1.5,0 0,1.5 2.6,3.7 0,5.9 1.5,7.4 6.2,3.7" fill="#5f5f5f"/></svg>
<div class="btn" style="left:11px;top:449px;width:98px;height:20px"></div>
<div class="t" style="left:43px;top:453px"><span class="sx" style="transform:scaleX(0.9123773454983646)">Posição OP</span></div>
<div class="btn" style="left:112px;top:449px;width:98px;height:20px"></div>
<div class="t" style="left:138px;top:453px"><span class="sx" style="transform:scaleX(0.9637850467289719)">Ord.Produção</span></div>
<div class="btn" style="left:213px;top:449px;width:98px;height:20px"></div>
<div class="t" style="left:252px;top:453px"><span class="sx" style="transform:scaleX(0.9663032705649157)">Quebrar</span></div>
<div class="a" style="left:311px;top:444px;width:104px;height:30px;border:3px solid #0b2d8e;border-radius:2px"></div>
<div class="a" style="left:314px;top:447px;width:98px;height:24px;background:#fff"></div>
<div class="btn" style="left:314px;top:449px;width:98px;height:20px"></div>
<div class="t" style="left:338px;top:453px"><span class="sx" style="transform:scaleX(0.9809496730167756)">Lote produção</span></div>
<div class="btn" style="left:415px;top:449px;width:84px;height:20px"></div>
<div class="t" style="left:440px;top:453px"><span class="sx" style="transform:scaleX(1.0340289528106787)">Alt.Dat.Ref</span></div>
<div class="btn" style="left:501px;top:449px;width:11px;height:20px"></div><svg class="a" style="left:503px;top:457px" width="7" height="4" viewBox="0 0 7 4"><polygon points="0,0 6.2,0 3.9,3.2 2.3,3.2" fill="#000"/></svg>
<div class="btn" style="left:516px;top:449px;width:84px;height:20px"></div>
<div class="t" style="left:543px;top:453px"><span class="sx" style="transform:scaleX(1.0484378276368211)">Alt.Dat.Ini</span></div>
<div class="btn" style="left:602px;top:449px;width:11px;height:20px"></div><svg class="a" style="left:604px;top:457px" width="7" height="4" viewBox="0 0 7 4"><polygon points="0,0 6.2,0 3.9,3.2 2.3,3.2" fill="#000"/></svg>
<div class="btn" style="left:11px;top:472px;width:84px;height:20px"></div>
<div class="t" style="left:35px;top:476px"><span class="sx" style="transform:scaleX(0.9348914858096828)">Emit/Reemit</span></div>
<div class="btn" style="left:97px;top:472px;width:11px;height:20px"></div><svg class="a" style="left:99px;top:480px" width="7" height="4" viewBox="0 0 7 4"><polygon points="0,0 6.2,0 3.9,3.2 2.3,3.2" fill="#000"/></svg>
<div class="btn" style="left:112px;top:472px;width:84px;height:20px"></div>
<div class="t" style="left:134px;top:476px"><span class="sx" style="transform:scaleX(0.9846461949265687)">Alterar Máq.</span></div>
<div class="btn" style="left:198px;top:472px;width:11px;height:20px"></div><svg class="a" style="left:200px;top:480px" width="7" height="4" viewBox="0 0 7 4"><polygon points="0,0 6.2,0 3.9,3.2 2.3,3.2" fill="#000"/></svg>
<div class="btn" style="left:213px;top:472px;width:98px;height:20px"></div>
<div class="t" style="left:245px;top:476px"><span class="sx" style="transform:scaleX(1.0003847633705272)">Prior.Talão</span></div>
<div class="btn" style="left:314px;top:472px;width:98px;height:20px"></div>
<div class="t" style="left:356px;top:476px"><span class="sx" style="transform:scaleX(0.9753298909925416)">Config.</span></div>
<div class="a" style="left:311px;top:471px;width:104px;height:3px;background:#0b2d8e;border-radius:0 0 2px 2px"></div>
<div class="btn" style="left:415px;top:472px;width:98px;height:20px"></div>
<div class="t" style="left:447px;top:476px"><span class="sx" style="transform:scaleX(1.0077961589655828)">Dt.Entrega</span></div>
<div class="btn" style="left:631px;top:449px;width:23px;height:20px"></div>
<div class="btn" style="left:657px;top:449px;width:23px;height:20px"></div>
<div class="btn" style="left:683px;top:449px;width:23px;height:20px"></div>
<div class="btn" style="left:631px;top:472px;width:23px;height:20px"></div>
<div class="btn" style="left:657px;top:472px;width:23px;height:20px"></div>
<div class="btn" style="left:683px;top:472px;width:23px;height:20px"></div>
<div class="btn" style="left:631px;top:495px;width:23px;height:20px"></div>
<div class="btn" style="left:657px;top:495px;width:23px;height:20px"></div>
<div class="btn" style="left:683px;top:495px;width:23px;height:20px"></div>
<div class="btn" style="left:631px;top:518px;width:23px;height:20px"></div>
<div class="a" style="left:714px;top:448px;width:1px;height:22px;background:#a0a0a0"></div>
<div class="a" style="left:777px;top:448px;width:1px;height:22px;background:#a0a0a0"></div>
<div class="btn" style="left:721px;top:449px;width:23px;height:20px"></div>
<div class="btn" style="left:747px;top:449px;width:23px;height:20px"></div>
<div class="btn" style="left:784px;top:449px;width:98px;height:20px"></div>
<div class="t" style="left:813px;top:453px"><span class="sx" style="transform:scaleX(0.9780775716694773)">F5-Atuali<u>z</u>ar</span></div>
<div class="btn" style="left:885px;top:449px;width:83px;height:20px"></div>
<div class="t" style="left:913px;top:453px"><span class="sx" style="transform:scaleX(0.9817007534983854)">F9-Filtros</span></div>
<div class="btn" style="left:970px;top:449px;width:11px;height:20px"></div><svg class="a" style="left:972px;top:457px" width="7" height="4" viewBox="0 0 7 4"><polygon points="0,0 6.2,0 3.9,3.2 2.3,3.2" fill="#000"/></svg>
<div class="btn" style="left:11px;top:504px;width:98px;height:42px"></div>
<div class="t" style="left:56px;top:519px"><span class="sx" style="transform:scaleX(0.9594882729211087)">A<u>j</u>uda</span></div>
<div class="btn" style="left:885px;top:504px;width:98px;height:42px"></div>
<div class="t" style="left:935px;top:519px"><span class="sx" style="transform:scaleX(0.869120654396728)"><u>S</u>air</span></div>
<svg class="a" style="left:0;top:0" width="996" height="558" viewBox="0 0 996 558">
<!-- posicao OP: 25..39 x 452..466 -->
<path d="M25 459 L33 457.5 L33.5 452 L37.5 452 L37.5 457 L39.5 458 L39.5 466 L31 466.5 L25 464.5 Z" fill="#e85a2c"/>
<path d="M34 452 h3 v4 h-3 z" fill="#f27c50"/>
<path d="M25 460 L31 462 L31 466.5 L25 464.5 Z" fill="#f48858"/>
<path d="M35 459 l2 -1.5 l2 1.5" stroke="#c03a18" stroke-width="0.8" fill="none"/>
<circle cx="29.8" cy="456.8" r="4.6" fill="#a8cfe2" stroke="#6f8088" stroke-width="0.9"/>
<ellipse cx="28.8" cy="455.6" rx="2.3" ry="1.8" fill="#e2f2fa"/>
<path d="M33.5 460.5 L38.5 465.5" stroke="#f2c628" stroke-width="1.8"/>
<path d="M32.6 459.6 L34.2 461.2" stroke="#303030" stroke-width="1.8"/>

<!-- ord produção: 119..132 x 451..465 -->
<path d="M119.5 451.5 H128 L131 454.5 V465 H119.5 Z" fill="#fff" stroke="#5a6ea8" stroke-width="1"/>
<path d="M128 451.5 V454.5 H131" fill="#ccd6f0" stroke="#5a6ea8" stroke-width="1"/>
<path d="M121 457.5 H129" stroke="#8a98cc" stroke-width="1"/>
<path d="M121 459 H126" stroke="#b8c4e8" stroke-width="1"/>
<path d="M122 461 L125 458.5 L129 458.5 L132.5 460.5 L133 465 L131 467 L124 467 L122 464 Z" fill="#ee5c2c"/>
<path d="M124.5 460 L128.5 459.5 L131.5 461 L127.5 462.5 Z" fill="#6a6a6a"/>

<!-- quebrar: 232..247 x 451..466 -->
<rect x="232.5" y="451.5" width="15" height="14.5" fill="#f6f8fd" stroke="#2a64d6" stroke-width="1"/>
<rect x="232" y="451" width="16" height="3" fill="#2c6ae8"/>
<rect x="233" y="452" width="6" height="1.5" fill="#7ab0ff"/>
<path d="M235.5 455 V463.5 H238.5 M235.5 458.5 H238" stroke="#7a7a7a" stroke-width="1" fill="none"/>
<rect x="239" y="456" width="3" height="3" fill="#f07a00"/>
<rect x="239" y="461" width="3" height="3" fill="#f07a00"/>
<rect x="243" y="455" width="3.5" height="10" fill="#e6eaf6"/>

<!-- lote: 320..334 x 452..466 -->
<path d="M320.5 455 L326.5 452.3 L333.8 454.5 L333.8 463 L328 466.5 L321 464.5 Z" fill="#e2b01c"/>
<path d="M325 456 L329 455.5 L329 465 L325 464.5 Z" fill="#f4cc3a"/>
<path d="M321 455 L327 453 L333.5 454.8 L328 456.5 Z" fill="#f2d050"/>
<path d="M322.8 454.4 V463.8 M328.7 456.3 V465.7 M320.8 459.6 L326.5 461 L333.6 459 M324.8 453.6 L331 455.6" stroke="#4a3c14" stroke-width="0.9" fill="none"/>

<g transform="translate(0,0)">
<rect x="420.5" y="456.5" width="9" height="8.5" fill="#fff" stroke="#7b74bd" stroke-width="1"/>
<rect x="420" y="464.5" width="10" height="1.5" fill="#8a84c8"/>
<rect x="421" y="455" width="3" height="2" fill="#505050"/>
<path d="M421.5 459.5 h1.5 v4 M423.8 463.5 h-2.3" stroke="#ff5a14" stroke-width="1.2" fill="none"/>
<path d="M424.5 460 l3 3 M427.5 460 l-3 3" stroke="#ff6a24" stroke-width="1.1"/>
<path d="M421.5 463.8 h7" stroke="#c8c0f0" stroke-width="0.8"/>
<circle cx="430" cy="455.5" r="4.6" fill="#5a5a66"/>
<circle cx="430" cy="455.3" r="3.7" fill="#d4f2fc"/>
<path d="M428.2 453.8 L430 456 L431.8 453.8" stroke="#303030" stroke-width="1.1" fill="none"/>
</g>
<g transform="translate(103,0)">
<rect x="420.5" y="456.5" width="9" height="8.5" fill="#fff" stroke="#7b74bd" stroke-width="1"/>
<rect x="420" y="464.5" width="10" height="1.5" fill="#8a84c8"/>
<rect x="421" y="455" width="3" height="2" fill="#505050"/>
<path d="M421.5 459.5 h1.5 v4 M423.8 463.5 h-2.3" stroke="#ff5a14" stroke-width="1.2" fill="none"/>
<path d="M424.5 460 l3 3 M427.5 460 l-3 3" stroke="#ff6a24" stroke-width="1.1"/>
<path d="M421.5 463.8 h7" stroke="#c8c0f0" stroke-width="0.8"/>
<circle cx="430" cy="455.5" r="4.6" fill="#5a5a66"/>
<circle cx="430" cy="455.3" r="3.7" fill="#d4f2fc"/>
<path d="M428.2 453.8 L430 456 L431.8 453.8" stroke="#303030" stroke-width="1.1" fill="none"/>
</g>
<g transform="translate(8,23)">
<rect x="420.5" y="456.5" width="9" height="8.5" fill="#fff" stroke="#7b74bd" stroke-width="1"/>
<rect x="420" y="464.5" width="10" height="1.5" fill="#8a84c8"/>
<rect x="421" y="455" width="3" height="2" fill="#505050"/>
<path d="M421.5 459.5 h1.5 v4 M423.8 463.5 h-2.3" stroke="#ff5a14" stroke-width="1.2" fill="none"/>
<path d="M424.5 460 l3 3 M427.5 460 l-3 3" stroke="#ff6a24" stroke-width="1.1"/>
<path d="M421.5 463.8 h7" stroke="#c8c0f0" stroke-width="0.8"/>
<circle cx="430" cy="455.5" r="4.6" fill="#5a5a66"/>
<circle cx="430" cy="455.3" r="3.7" fill="#d4f2fc"/>
<path d="M428.2 453.8 L430 456 L431.8 453.8" stroke="#303030" stroke-width="1.1" fill="none"/>
</g>

<!-- emit: 16..30 x 474..488 -->
<path d="M16.5 474.5 H24 L27 477.5 V488.5 H16.5 Z" fill="#fff" stroke="#5a74b0" stroke-width="1"/>
<path d="M24 474.5 V477.5 H27" fill="#ccd6f0" stroke="#5a74b0" stroke-width="1"/>
<path d="M18 479.5 H22" stroke="#9aaad8" stroke-width="1"/>
<path d="M21 478.5 L27.5 478 L28 482.5 L21 482.5 Z" fill="#bde6f8"/>
<path d="M19.5 482.5 H30 V487 H19.5 Z" fill="#cfcfcf" stroke="#8a8a8a" stroke-width="0.8"/>
<rect x="20.5" y="486" width="8" height="2.5" fill="#f6f6f6"/>
<circle cx="28.6" cy="483.8" r="0.7" fill="#22c022"/>

<!-- alterar: 116..129 x 474..489 -->
<circle cx="121.5" cy="477.3" r="3.1" fill="#ee6a28"/>
<path d="M121.5 480 V483" stroke="#505050" stroke-width="1.4"/>
<path d="M116 484 L121.5 482.5 L125 484 L125 489 L116 487 Z" fill="#8c8c8c"/>
<path d="M116 484 L121.5 482.5 L125 484 L120 485.5 Z" fill="#bdbdbd"/>
<rect x="120" y="482.5" width="3" height="2" fill="#a4a0e6"/>
<path d="M123.5 482 L129.5 485.3 L123.5 489 Z" fill="#2cb02c"/>
<path d="M124.5 483.5 L127 485.2 L124.5 486.5 Z" fill="#86f066"/>

<!-- prior: 227..241 x 475..488 -->
<rect x="227.5" y="478.5" width="11" height="10" fill="#fff" stroke="#6a7fb0" stroke-width="1"/>
<rect x="229" y="481" width="8" height="6" fill="#b6c6e8"/>
<path d="M228 480 L231.5 477.5 L235 475.5 L239.5 475.3 L241.5 476.5 L241.5 480 L239 482 L235 482.5 L232 481 Z" fill="#e8b444"/>
<path d="M234.5 476.5 L239.5 476.3" stroke="#fff0b8" stroke-width="1"/>
<path d="M231 479.5 L233 478.5 M232 481 l2 -1" stroke="#c08a20" stroke-width="0.7"/>

<!-- config (checklist) row2: 337..349 x 474..488 -->
<rect x="337.8" y="474.8" width="10.8" height="13" rx="1.3" fill="#fdfaf6" stroke="#1a7ae4" stroke-width="1.6"/>
<path d="M340 477.5 L342 479.8 L346.5 475.5 M340 482.5 L342 484.8 L346.5 480.5" stroke="#e01414" stroke-width="1.5" fill="none"/>

<!-- binoculars: 635..649 x 454..463 -->
<path d="M635 457.5 L640 454.5 L643 456 L646 455 L649.5 457.5 L649.5 460.5 L642 461.5 L637 460 Z" fill="#5a5a5a"/>
<path d="M636.5 457.2 L640.5 455.2 L642.5 456.5" stroke="#d8d8d8" stroke-width="1" fill="none"/>
<path d="M643.5 456.5 L646 455.6" stroke="#bcbcbc" stroke-width="0.9"/>
<circle cx="641.5" cy="460.5" r="2.5" fill="#3a3a3a"/>
<circle cx="646.5" cy="459.5" r="2.5" fill="#3a3a3a"/>
<circle cx="641.5" cy="460.8" r="1.8" fill="#a8d4f8"/>
<circle cx="646.5" cy="459.8" r="1.8" fill="#a8d4f8"/>
<circle cx="641" cy="460.2" r="0.7" fill="#e8f4ff"/>
<circle cx="646" cy="459.2" r="0.7" fill="#e8f4ff"/>

<!-- excel: 660..675 x 451..466 -->
<path d="M663.5 451.5 H673 L675.5 454 V466.5 H663.5 Z" fill="#e6eefb" stroke="#3c58a0" stroke-width="1"/>
<path d="M670.5 453.5 v1 M670.5 456 v1 M670.5 458.5 v1 M666 463.5 h3" stroke="#8aa0d8" stroke-width="1"/>
<rect x="660" y="452" width="11" height="9.5" fill="#229a38"/>
<rect x="660" y="452" width="11" height="3" fill="#4cc060"/>
<rect x="662.5" y="454" width="8" height="7" fill="#e2f2cc"/>
<path d="M664 455 L668.5 460 M668.5 455 L664 460" stroke="#248a30" stroke-width="1.4"/>

<!-- doc: 687..699 x 451..466 -->
<path d="M687.5 451.5 H696 L699.5 455 V466.5 H687.5 Z" fill="#fff" stroke="#5a6aa6" stroke-width="1"/>
<path d="M696 451.5 V455 H699.5" fill="#d8def2" stroke="#5a6aa6" stroke-width="1"/>
<path d="M689 456.5 H698" stroke="#8c9ad0" stroke-width="1"/>
<rect x="689" y="458" width="9" height="5" fill="#aebbe2"/>
<path d="M700 456 V467 H688" stroke="#909090" stroke-width="0.8" fill="none" opacity="0.6"/>

<!-- handgrid: 634..650 x 474..488 -->
<rect x="634.8" y="474.8" width="13" height="13" rx="1.5" fill="#fff" stroke="#2090f4" stroke-width="1.6"/>
<path d="M635 476.5 H648" stroke="#2090f4" stroke-width="1.2"/>
<path d="M636 480.5 H647 M636 483 H647 M636 485.5 H647 M641 478 V487 M644 478 V487" stroke="#c4cce8" stroke-width="0.8"/>
<rect x="637" y="478" width="1.6" height="9" fill="#f05a2e"/>
<path d="M638.5 480 L642 477.5 L647.5 477.3 L650.5 479 L650 482.5 L646 484.5 L642 484 L639.5 482 Z" fill="#e4b040"/>
<path d="M643 478.5 L648 478.3" stroke="#fff0b0" stroke-width="0.9"/>

<!-- sort: 660..674 x 474..488 -->
<rect x="660.8" y="474.8" width="13" height="13" rx="1.5" fill="#f2f0fa" stroke="#2090f4" stroke-width="1.6"/>
<path d="M661 476.5 H674" stroke="#2090f4" stroke-width="1.4"/>
<path d="M665 486.5 V479.5" stroke="#f01818" stroke-width="1.8"/>
<path d="M662.8 481 L665 478 L667.2 481 Z" fill="#f01818"/>
<path d="M670 478 V485" stroke="#148030" stroke-width="1.8"/>
<path d="M667.8 483.5 L670 486.8 L672.2 483.5 Z" fill="#148030"/>

<!-- palette: 688..700 x 477..486 -->
<path d="M688.5 480.5 C689.5 477.5 694.5 476.8 698 478.3 C700.5 479.5 700.8 482.8 699 484.5 C697.5 485.8 696 484.5 694 485.5 C692 486.8 688 484.5 688.5 480.5 Z" fill="#ecc868"/>
<path d="M689.5 481 C690 479 693 478 696 478.5" stroke="#f4e0a0" stroke-width="1" fill="none"/>
<ellipse cx="692.2" cy="479.8" rx="1.3" ry="0.9" fill="#4a84e0"/>
<circle cx="696.3" cy="480" r="1.1" fill="#30b040"/>
<ellipse cx="697.2" cy="483" rx="1.3" ry="0.9" fill="#e84848"/>

<!-- keycap: 635..649 x 499..509 -->
<path d="M635.5 503.5 L640.5 499.5 L646.5 500 L649 505 L643 509.5 L636.5 507 Z" fill="#d8d8d8"/>
<path d="M635.5 503.5 L640.5 499.5 L646.5 500 L647.5 503 L641.5 506 Z" fill="#f8f8f8"/>
<path d="M641.5 506 L647.5 503 L649 505 L643 509.5 Z" fill="#b8b8b8"/>
<path d="M639 501.5 L642.5 500.2 L643.5 502 L641 503 Z" fill="#2a88e6"/>

<!-- gear: 661..674 x 498..511 -->
<polygon points="674.63,503.84 674.63,505.76 672.68,505.91 672.25,507.09 673.65,508.46 672.42,509.93 670.82,508.78 669.74,509.41 669.93,511.36 668.04,511.70 667.56,509.79 666.32,509.58 665.22,511.20 663.55,510.24 664.40,508.47 663.60,507.51 661.71,508.04 661.05,506.23 662.84,505.43 662.84,504.17 661.05,503.37 661.71,501.56 663.60,502.09 664.40,501.13 663.55,499.36 665.22,498.40 666.32,500.02 667.56,499.81 668.04,497.90 669.93,498.24 669.74,500.19 670.82,500.82 672.42,499.67 673.65,501.14 672.25,502.51 672.68,503.69" fill="#b4b4e4" stroke="#7c7cc0" stroke-width="0.8"/>
<circle cx="667.8" cy="504.8" r="4" fill="#c4c4ee"/>
<circle cx="667.8" cy="504.8" r="1.7" fill="#ececf8" stroke="#8c8cc8" stroke-width="0.6"/>

<!-- download: 687..700 x 497..511 -->
<path d="M687.5 506 L692.5 503 L700 505.5 L700 508 L694 511.5 L687.5 508.5 Z" fill="#8c8c8c"/>
<path d="M687.5 506 L692.5 503 L700 505.5 L694 508.5 Z" fill="#f6f6f6"/>
<path d="M691.5 497 H696 V501 H698.5 L693.8 505.5 L689 501 H691.5 Z" fill="#3cc02c"/>
<path d="M692.5 497.5 V501.5" stroke="#a6f08c" stroke-width="1"/>

<!-- config (checklist) grid row4: 635..647 x 520..534 -->
<rect x="635.8" y="520.8" width="10.8" height="13" rx="1.3" fill="#fdfaf6" stroke="#1a7ae4" stroke-width="1.6"/>
<path d="M638 523.5 L640 525.8 L644.5 521.5 M638 528.5 L640 530.8 L644.5 526.5" stroke="#e01414" stroke-width="1.5" fill="none"/>

<!-- checkbox on: 726..737 x 453..464 -->
<rect x="726.5" y="453.5" width="11" height="11" fill="#fff" stroke="#6a6a6a" stroke-width="1.2"/>
<path d="M728.3 458 L731.2 462.3 L737.3 453.6" stroke="#0c3cb8" stroke-width="2.3" fill="none"/>
<!-- checkbox off: 752..763 x 453..464 -->
<defs><linearGradient id="cg" x1="0" y1="0" x2="1" y2="1"><stop offset="0" stop-color="#e2e2e2"/><stop offset="1" stop-color="#fbfbfb"/></linearGradient></defs>
<rect x="752.5" y="453.5" width="11" height="11" fill="url(#cg)" stroke="#6a6a6a" stroke-width="1.2"/>

<!-- refresh: 794..808 x 451..465 -->
<circle cx="801" cy="458" r="4.8" fill="none" stroke="#26a626" stroke-width="4.3"/>
<circle cx="801" cy="458" r="4.8" fill="none" stroke="#58d048" stroke-width="2"/>
<path d="M801 458 L802.5 450.5 M801 458 L808.5 461 M801 458 L794 461.5" stroke="#e4e4e4" stroke-width="0.9"/>
<path d="M794 454 L794.5 459 L799 457.5 Z M805 450.8 L809 453.5 L805.5 455.5 Z M800 466 L803.5 461.5 L797 462.5 Z" fill="#2cae2c"/>
<circle cx="801" cy="458" r="2" fill="#e1e1e1"/>

<!-- funnel: 894..908 x 451..465 -->
<path d="M894.5 454 L901 461 L901 465 L905.5 465 L905.5 460 L908.5 454.5 Z" fill="#f4f4f4" stroke="#8a8a8a" stroke-width="0.7"/>
<ellipse cx="901.3" cy="454" rx="7" ry="2.4" fill="#e8e8e8" stroke="#606060" stroke-width="0.7"/>
<ellipse cx="899" cy="453.8" rx="4" ry="1.3" fill="#9a9a9a" opacity="0.7"/>
<path d="M901.2 460.8 L903.2 463.8 L907.8 456.8" stroke="#1a68de" stroke-width="2.4" fill="none"/>

<!-- help: 36..50 x 518..531 -->
<circle cx="43.5" cy="525" r="6.6" fill="#8a8a8a" opacity="0.55"/>
<circle cx="43" cy="524.5" r="6.4" fill="#fff"/>
<circle cx="43" cy="524.5" r="5.5" fill="#3a8ee8"/>
<path d="M37.8 523 A5.5 5.5 0 0 1 48.2 523" fill="#7cb8f4" opacity="0.6"/>
<path d="M41 522.5 C41 520.3 45 520.3 45 522.5 C45 524 43 524 43 525.8" stroke="#fff" stroke-width="1.6" fill="none"/>
<rect x="42.2" y="526.8" width="1.7" height="1.6" fill="#fff"/>

<!-- exit: 915..929 x 517..531 -->
<path d="M920 518.5 L927.5 517.5 L928.5 518.5 L928.5 530 L922 531.5 L920 530 Z" fill="#606068"/>
<path d="M921 519 L927 518 L927 529.5 L922 531 Z" fill="#9494dc"/>
<path d="M922 520 L926 519.5 V529 L922 530 Z" fill="#a8a8ee"/>
<rect x="924.5" y="520.5" width="1.5" height="1" fill="#fff"/>
<rect x="921" y="520" width="1" height="9" fill="#dff2ff"/>
<path d="M915 522 H919 V519.5 L923.5 524 L919 528.5 V526 H915 Z" fill="#28b820"/>
<path d="M915.5 523 H919.5" stroke="#8cf070" stroke-width="1"/>
</svg>
</body></html>
